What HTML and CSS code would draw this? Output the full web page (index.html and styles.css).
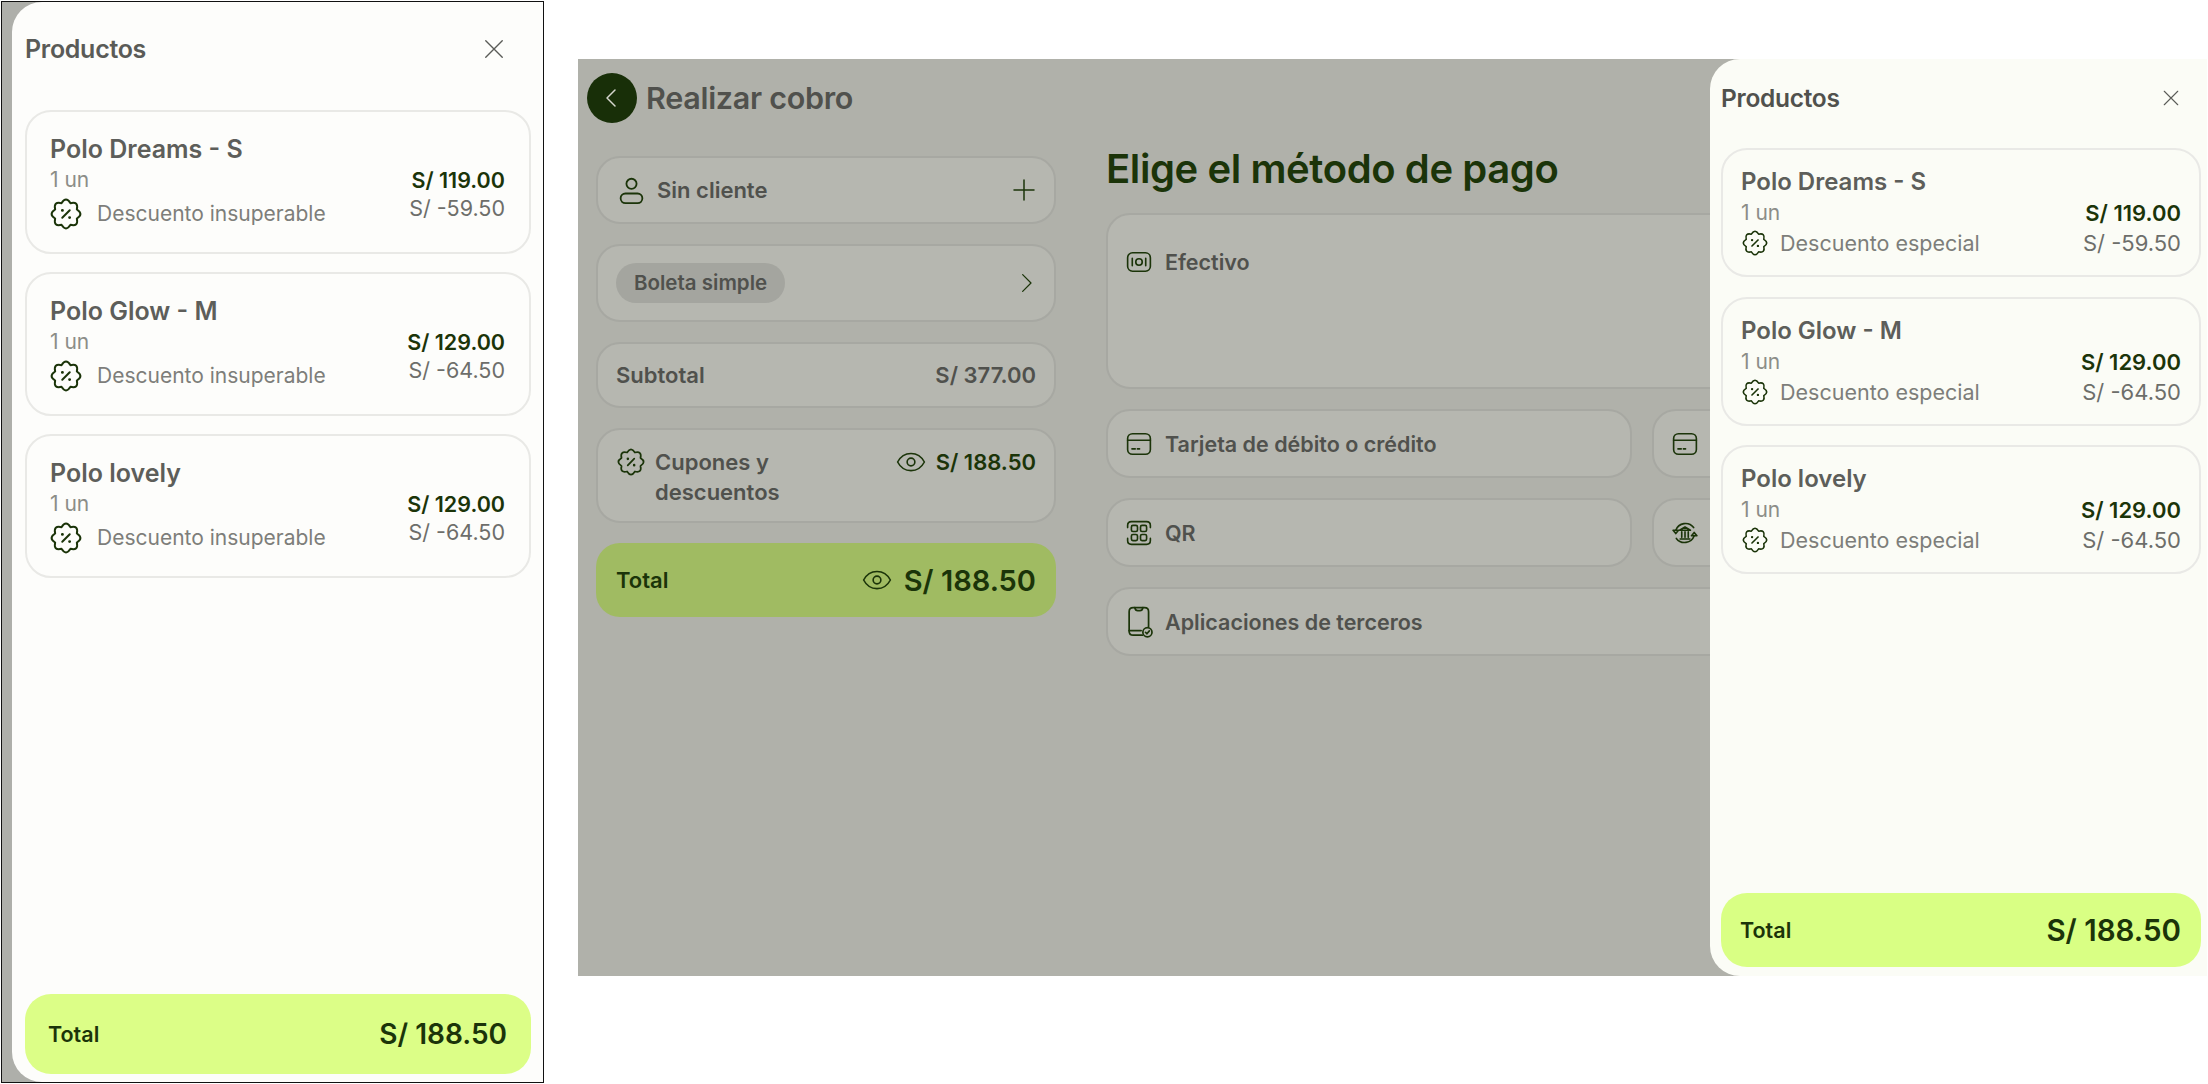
FILE: index.html
```html
<!DOCTYPE html>
<html lang="es">
<head>
<meta charset="utf-8">
<title>Realizar cobro</title>
<link rel="stylesheet" href="styles.css">
</head>
<body>
<svg class="defs" width="0" height="0">
    <symbol id="i-badge" viewBox="0 0 24 24">
        <path d="M20.13 15.37Q21.55 21.55 15.37 20.13Q12 25.5 8.63 20.13Q2.45 21.55 3.87 15.37Q-1.5 12 3.87 8.63Q2.45 2.45 8.63 3.87Q12 -1.5 15.37 3.87Q21.55 2.45 20.13 8.63Q25.5 12 20.13 15.37Z"/>
        <path d="M9.2 14.8L14.8 9.2"/>
        <path d="M9.3 9.3h.01M14.7 14.7h.01" stroke-width="2.2"/>
    </symbol>
    <symbol id="i-close" viewBox="0 0 24 24"><path d="M3 3L21 21M21 3L3 21"/></symbol>
    <symbol id="i-user" viewBox="0 0 24 24">
        <circle cx="12" cy="6.5" r="4.2"/>
        <rect x="3" y="14.5" width="18" height="8" rx="4"/>
    </symbol>
    <symbol id="i-plus" viewBox="0 0 24 24"><path d="M12 2V22M2 12H22"/></symbol>
    <symbol id="i-back" viewBox="0 0 24 24"><path d="M15 4L7 12L15 20"/></symbol>
    <symbol id="i-next" viewBox="0 0 24 24"><path d="M8 2L18 12L8 22"/></symbol>
    <symbol id="i-eye" viewBox="0 0 28 24">
        <path d="M1.5 12C4.5 6.2 9 4 14 4S23.5 6.2 26.5 12C23.5 17.8 19 20 14 20S4.5 17.8 1.5 12Z"/>
        <circle cx="14" cy="12" r="3.6"/>
    </symbol>
    <symbol id="i-cash" viewBox="0 0 24 24">
        <rect x="1.5" y="3.5" width="21" height="17" rx="4.5"/>
        <circle cx="12" cy="12" r="3"/>
        <path d="M5.8 8.5V15.5M18.2 8.5V15.5"/>
    </symbol>
    <symbol id="i-card" viewBox="0 0 24 24">
        <rect x="1.5" y="2.5" width="21" height="19" rx="4.5"/>
        <path d="M1.5 8.5H22.5M5.5 16.5H8.5M10.5 16.5H12.5"/>
    </symbol>
    <symbol id="i-qr" viewBox="0 0 24 24">
        <path d="M1.5 7V5Q1.5 1.5 5 1.5H19Q22.5 1.5 22.5 5V7M1.5 17V19Q1.5 22.5 5 22.5H19Q22.5 22.5 22.5 19V17"/>
        <rect x="5" y="5" width="5.6" height="5.6" rx="1.4"/>
        <rect x="13.4" y="5" width="5.6" height="5.6" rx="1.4"/>
        <rect x="5" y="13.4" width="5.6" height="5.6" rx="1.4"/>
        <rect x="13.4" y="13.4" width="5.6" height="5.6" rx="1.4"/>
    </symbol>
    <symbol id="i-phone" viewBox="0 0 24 28">
        <path d="M14 25.5H6Q2.5 25.5 2.5 22V5Q2.5 1.5 6 1.5H16Q19.5 1.5 19.5 5V18"/>
        <path d="M7.5 1.5Q8 4 10 4H12Q14 4 14.5 1.5M2.5 21.5H13"/>
        <circle cx="18.5" cy="23" r="4"/>
        <path d="M16.8 23L18 24.3L20.2 21.8"/>
    </symbol>
    <symbol id="i-bank" viewBox="0 0 24 24">
        <path d="M3.5 9.5A9.5 9.5 0 0 1 20 7M20.5 14.5A9.5 9.5 0 0 1 4 17"/>
        <path d="M1 9.5H6L3.5 12.5ZM18 14.5H23L20.5 11.5Z"/>
        <path d="M7 9.5L12 6.5L17 9.5ZM7.5 17.5H16.5M9 11V16M12 11V16M15 11V16"/>
    </symbol>
</svg>

<section class="frame">
    <aside class="drawer drawer-large">
        <header class="drawer-head">
            <h2>Productos</h2>
            <svg class="icon close"><use href="#i-close"/></svg>
        </header>
        <div class="product">
            <h3>Polo Dreams - S</h3>
            <div class="product-row">
                <div>
                    <p class="qty">1 un</p>
                    <p class="promo"><svg class="icon"><use href="#i-badge"/></svg>Descuento insuperable</p>
                </div>
                <div class="amounts"><b>S/ 119.00</b><span>S/ -59.50</span></div>
            </div>
        </div>
        <div class="product">
            <h3>Polo Glow - M</h3>
            <div class="product-row">
                <div>
                    <p class="qty">1 un</p>
                    <p class="promo"><svg class="icon"><use href="#i-badge"/></svg>Descuento insuperable</p>
                </div>
                <div class="amounts"><b>S/ 129.00</b><span>S/ -64.50</span></div>
            </div>
        </div>
        <div class="product">
            <h3>Polo lovely</h3>
            <div class="product-row">
                <div>
                    <p class="qty">1 un</p>
                    <p class="promo"><svg class="icon"><use href="#i-badge"/></svg>Descuento insuperable</p>
                </div>
                <div class="amounts"><b>S/ 129.00</b><span>S/ -64.50</span></div>
            </div>
        </div>
        <footer class="drawer-total"><b>Total</b><strong>S/ 188.50</strong></footer>
    </aside>
</section>

<section class="screen">
    <main class="checkout">
        <header class="checkout-head">
            <span class="back"><svg class="icon"><use href="#i-back"/></svg></span>
            <h1>Realizar cobro</h1>
        </header>
        <div class="columns">
            <div class="summary">
                <div class="box box-client">
                    <svg class="icon"><use href="#i-user"/></svg>
                    <span class="grow">Sin cliente</span>
                    <svg class="icon plus"><use href="#i-plus"/></svg>
                </div>
                <div class="box box-doc">
                    <span class="chip">Boleta simple</span>
                    <svg class="icon next"><use href="#i-next"/></svg>
                </div>
                <div class="box box-sub">
                    <span class="grow">Subtotal</span>
                    <span>S/ 377.00</span>
                </div>
                <div class="box box-coupon">
                    <svg class="icon"><use href="#i-badge"/></svg>
                    <span class="grow">Cupones y<br>descuentos</span>
                    <svg class="icon eye"><use href="#i-eye"/></svg>
                    <b>S/ 188.50</b>
                </div>
                <div class="box-total">
                    <b class="grow">Total</b>
                    <svg class="icon eye"><use href="#i-eye"/></svg>
                    <strong>S/ 188.50</strong>
                </div>
            </div>
            <div class="payment">
                <h2>Elige el método de pago</h2>
                <div class="methods">
                    <div class="method method-wide method-tall"><svg class="icon"><use href="#i-cash"/></svg>Efectivo</div>
                    <div class="method"><svg class="icon"><use href="#i-card"/></svg>Tarjeta de débito o crédito</div>
                    <div class="method"><svg class="icon"><use href="#i-card"/></svg></div>
                    <div class="method"><svg class="icon"><use href="#i-qr"/></svg>QR</div>
                    <div class="method"><svg class="icon"><use href="#i-bank"/></svg></div>
                    <div class="method method-wide"><svg class="icon icon-phone"><use href="#i-phone"/></svg>Aplicaciones de terceros</div>
                </div>
            </div>
        </div>
    </main>
    <aside class="drawer drawer-small">
        <header class="drawer-head">
            <h2>Productos</h2>
            <svg class="icon close"><use href="#i-close"/></svg>
        </header>
        <div class="product">
            <h3>Polo Dreams - S</h3>
            <div class="product-row">
                <div>
                    <p class="qty">1 un</p>
                    <p class="promo"><svg class="icon"><use href="#i-badge"/></svg>Descuento especial</p>
                </div>
                <div class="amounts"><b>S/ 119.00</b><span>S/ -59.50</span></div>
            </div>
        </div>
        <div class="product">
            <h3>Polo Glow - M</h3>
            <div class="product-row">
                <div>
                    <p class="qty">1 un</p>
                    <p class="promo"><svg class="icon"><use href="#i-badge"/></svg>Descuento especial</p>
                </div>
                <div class="amounts"><b>S/ 129.00</b><span>S/ -64.50</span></div>
            </div>
        </div>
        <div class="product">
            <h3>Polo lovely</h3>
            <div class="product-row">
                <div>
                    <p class="qty">1 un</p>
                    <p class="promo"><svg class="icon"><use href="#i-badge"/></svg>Descuento especial</p>
                </div>
                <div class="amounts"><b>S/ 129.00</b><span>S/ -64.50</span></div>
            </div>
        </div>
        <footer class="drawer-total"><b>Total</b><strong>S/ 188.50</strong></footer>
    </aside>
</section>
</body>
</html>
```

FILE: styles.css
```css
/**
 * Generic styles
 */
* {
    box-sizing: border-box;
}
html, body {
    margin: 0;
    height: 1084px;
    overflow: hidden;
}
body {
    display: flex;
    align-items: flex-start;
    padding: 1px 0 0 1px;
    background-color: #fff;
    font-family: Inter, "Liberation Sans", sans-serif;
    color: #5a5b57;
}
h1, h2, h3, p {
    margin: 0;
}
.defs {
    position: absolute;
}
.icon {
    flex: none;
    width: 26px;
    height: 26px;
    fill: none;
    stroke: #1b3409;
    stroke-width: 1.5;
    stroke-linecap: round;
    stroke-linejoin: round;
}

/**
 * Products drawer
 */
.frame {
    flex: none;
    width: 543px;
    height: 1082px;
    border: 1.5px solid #111;
    padding-left: 10px;
    background-color: #aeafaa;
}
.drawer {
    display: flex;
    flex-direction: column;
    height: 100%;
    border-radius: 30px 0 0 30px;
}
.drawer-head {
    display: flex;
    justify-content: space-between;
    align-items: center;
}
.drawer-head h2 {
    font-weight: 600;
    letter-spacing: -0.3px;
}
.close {
    stroke: #5a5b57;
}
.product {
    border: 2px solid #e9e9e6;
    border-radius: 26px;
}
.product h3 {
    font-weight: 600;
    color: #5d5e5a;
}
.product-row {
    display: flex;
    justify-content: space-between;
    align-items: flex-start;
}
.qty {
    color: #8c8d88;
}
.promo {
    display: flex;
    align-items: center;
    color: #7d7e7a;
}
.amounts {
    display: flex;
    flex-direction: column;
    align-items: flex-end;
    color: #6d6e6a;
}
.amounts b {
    font-weight: 600;
    color: #1b3409;
}
.drawer-total {
    display: flex;
    justify-content: space-between;
    align-items: center;
    margin-top: auto;
    border-radius: 26px;
    color: #1b3409;
}
.drawer-total b,
.drawer-total strong {
    font-weight: 600;
}

/* big copy of the drawer, on the left of the board */
.drawer-large {
    padding: 0 12px 8px 13px;
    background-color: #fdfdfb;
}
.drawer-large .drawer-head {
    height: 94px;
    padding: 0 26px 0 0;
    margin-bottom: 14px;
}
.drawer-large h2 {
    font-size: 25px;
}
.drawer-large .close {
    width: 22px;
    height: 22px;
}
.drawer-large .product {
    height: 144px;
    padding: 22px 24px 0 23px;
    margin-bottom: 18px;
}
.drawer-large h3 {
    font-size: 25px;
    line-height: 30px;
}
.drawer-large .qty {
    font-size: 21px;
    line-height: 26px;
    margin-top: 3px;
}
.drawer-large .promo {
    gap: 15px;
    font-size: 21px;
    line-height: 34px;
    margin-top: 4px;
}
.drawer-large .promo .icon {
    width: 32px;
    height: 32px;
}
.drawer-large .amounts {
    font-size: 21.5px;
    line-height: 28px;
    padding-top: 2px;
}
.drawer-large .drawer-total {
    height: 80px;
    padding: 0 24px 0 23px;
    background-color: #dcfe87;
    font-size: 21.5px;
}
.drawer-large .drawer-total strong {
    font-size: 28px;
}

/* same drawer at screen size, over the checkout */
.drawer-small {
    flex: none;
    width: 497px;
    padding: 0 6px 9px 11px;
    background-color: #fbfcf6;
}
.drawer-small .drawer-head {
    height: 78px;
    padding: 0 21px 0 0;
    margin-bottom: 11px;
}
.drawer-small h2 {
    font-size: 24.5px;
}
.drawer-small .close {
    width: 18px;
    height: 18px;
}
.drawer-small .product {
    height: 129px;
    padding: 18px 18px 0 18px;
    margin-bottom: 19.5px;
}
.drawer-small h3 {
    font-size: 24px;
    line-height: 28px;
}
.drawer-small .qty {
    font-size: 21px;
    line-height: 26px;
    margin-top: 4px;
}
.drawer-small .promo {
    gap: 12px;
    font-size: 21.5px;
    line-height: 28px;
    margin-top: 3px;
}
.drawer-small .promo .icon {
    margin-left: 1px;
}
.drawer-small .amounts {
    font-size: 22px;
    line-height: 30px;
    padding-top: 2px;
}
.drawer-small .drawer-total {
    height: 74px;
    padding: 0 20px 0 19px;
    background-color: #d9ff84;
    font-size: 21.5px;
}
.drawer-small .drawer-total strong {
    font-size: 29.5px;
}

/**
 * Checkout screen, dimmed behind the drawer
 */
.screen {
    display: flex;
    flex: none;
    width: 1629px;
    height: 917px;
    margin: 58px 0 0 34px;
    background-color: #b0b1aa;
    color: #50514d;
}
.checkout {
    flex: none;
    width: 1132px;
    overflow: hidden;
}
.checkout-head {
    display: flex;
    align-items: center;
    gap: 9px;
    height: 78px;
    margin-bottom: 19px;
    padding: 0 0 0 9px;
}
.checkout-head h1 {
    padding-bottom: 2px;
    font-size: 30.5px;
    font-weight: 600;
    letter-spacing: -0.3px;
}
.back {
    display: flex;
    justify-content: center;
    align-items: center;
    width: 50px;
    height: 50px;
    border-radius: 50%;
    background-color: #182f08;
}
.back .icon {
    width: 24px;
    height: 24px;
    stroke: #d5d6ce;
}
.columns {
    display: flex;
    padding-left: 18px;
}

.summary {
    display: flex;
    flex: none;
    flex-direction: column;
    gap: 20px;
    width: 460px;
    font-size: 22px;
    font-weight: 600;
}
.box {
    display: flex;
    align-items: center;
    border: 2px solid #a7a8a2;
    border-radius: 24px;
    background-color: #b6b7b0;
    padding: 0 18px;
}
.grow {
    flex: 1;
}
.box-client {
    gap: 11px;
    height: 68px;
    padding-left: 19px;
}
.box-client .icon:first-child {
    width: 29px;
    height: 29px;
}
.plus {
    width: 24px;
    height: 24px;
}
.box-doc {
    justify-content: space-between;
    height: 78px;
}
.chip {
    padding: 9px 18px;
    border-radius: 20px;
    background-color: #a4a59f;
    font-size: 20.5px;
    line-height: 22px;
}
.next {
    width: 20px;
    height: 24px;
}
.box-sub {
    height: 66px;
}
.box-coupon {
    align-items: flex-start;
    gap: 10px;
    height: 95px;
    padding-top: 17px;
    padding-left: 19px;
    line-height: 30px;
}
.box-coupon b {
    font-weight: 600;
    color: #1b3409;
}
.eye {
    width: 30px;
    height: 26px;
}
.box-coupon .icon:first-child {
    width: 28px;
    height: 28px;
    margin-top: 1px;
}
.box-coupon .eye {
    margin-top: 2px;
}
.box-total {
    display: flex;
    align-items: center;
    gap: 12px;
    height: 74px;
    padding: 0 20px;
    border-radius: 24px;
    background-color: #a0bb62;
    color: #1b3409;
}
.box-total b {
    font-weight: 600;
}
.box-total strong {
    font-size: 29px;
    font-weight: 600;
}

.payment {
    flex: none;
    width: 1092px;
    margin: -3px 0 0 50px;
}
.payment h2 {
    height: 60px;
    font-size: 40px;
    font-weight: 600;
    line-height: 32px;
    letter-spacing: -0.4px;
    color: #1b3409;
}
.methods {
    display: grid;
    grid-template-columns: 526px 526px;
    gap: 20px;
}
.method {
    display: flex;
    align-items: center;
    gap: 13px;
    height: 69px;
    padding: 0 18px;
    border: 2px solid #a7a8a2;
    border-radius: 24px;
    background-color: #b6b7b0;
    font-size: 21.5px;
    font-weight: 600;
}
.icon-phone {
    width: 28px;
    height: 32px;
    margin-right: -2px;
}
.method-wide {
    grid-column: 1 / 3;
}
.method-tall {
    align-items: flex-start;
    height: 176px;
    padding-top: 34px;
}
```
